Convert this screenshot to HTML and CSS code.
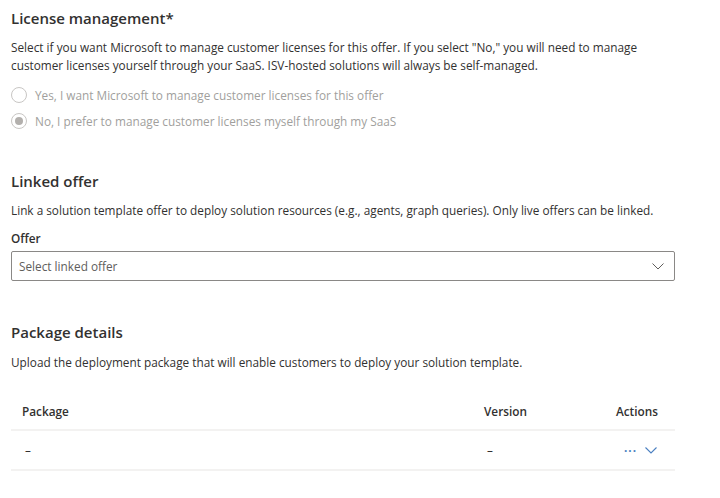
FILE: index.html
```html
<!DOCTYPE html>
<html lang="en">
<head>
<meta charset="utf-8">
<title>Offer setup</title>
<link rel="stylesheet" href="styles.css">
</head>
<body>
<main class="page">
  <section class="section">
    <h2 class="heading">License management<span class="req">*</span></h2>
    <p class="desc">Select if you want Microsoft to manage customer licenses for this offer. If you select "No," you will need to manage customer licenses yourself through your SaaS. ISV-hosted solutions will always be self-managed.</p>
    <div class="radios">
      <label class="radio"><span class="circle"></span><span class="radio-text">Yes, I want Microsoft to manage customer licenses for this offer</span></label>
      <label class="radio"><span class="circle checked"></span><span class="radio-text">No, I prefer to manage customer licenses myself through my SaaS</span></label>
    </div>
  </section>

  <section class="section linked">
    <h2 class="heading">Linked offer</h2>
    <p class="desc">Link a solution template offer to deploy solution resources (e.g., agents, graph queries). Only live offers can be linked.</p>
    <div class="field-label">Offer</div>
    <div class="dropdown">
      <span class="placeholder">Select linked offer</span>
      <svg class="chev" width="12" height="7" viewBox="0 0 12 7"><path d="M0.5 0.5 L6 6 L11.5 0.5" fill="none" stroke="#605e5c" stroke-width="1"/></svg>
    </div>
  </section>

  <section class="section package">
    <h2 class="heading">Package details</h2>
    <p class="desc pkg-desc">Upload the deployment package that will enable customers to deploy your solution template.</p>
    <div class="table">
      <div class="row head">
        <div class="cell c1">Package</div>
        <div class="cell c2">Version</div>
        <div class="cell c3">Actions</div>
      </div>
      <div class="row">
        <div class="cell c1 dash">–</div>
        <div class="cell c2 dash">–</div>
        <div class="cell c3 actions">
          <span class="dots">···</span>
          <svg class="act-chev" width="12" height="7" viewBox="0 0 12 7"><path d="M0.5 0.5 L6 6 L11.5 0.5" fill="none" stroke="#4a7fc1" stroke-width="1.1"/></svg>
        </div>
      </div>
    </div>
  </section>
</main>
</body>
</html>
```

FILE: styles.css
```css
* { box-sizing: border-box; }
html, body { margin: 0; padding: 0; background: #ffffff; }
body {
  font-family: "Open Sans", "Noto Sans", sans-serif;
  color: #323130;
  font-size: 11.8px;
}
.page {
  width: 675px;
  padding: 7px 0 0 11px;
}
.heading {
  margin: 0;
  font-size: 15px;
  line-height: 22px;
  font-weight: 600;
  color: #323130;
}
.req { margin-left: 0; }
.desc {
  margin: 9px 0 0 0;
  line-height: 18px;
  color: #323130;
}
.pkg-desc { margin-top: 10px; }
.radios {
  margin-top: 8px;
  display: flex;
  flex-direction: column;
}
.radio {
  display: flex;
  align-items: center;
  height: 26px;
  gap: 8px;
  color: #a19f9d;
}
.circle {
  width: 16px;
  height: 16px;
  border-radius: 50%;
  border: 1px solid #c8c6c4;
  display: flex;
  align-items: center;
  justify-content: center;
  flex: none;
}
.circle.checked::after {
  content: "";
  width: 8px;
  height: 8px;
  border-radius: 50%;
  background: #b3b0ad;
}
.linked { margin-top: 36px; }
.field-label {
  margin-top: 10px;
  font-weight: 600;
  line-height: 18px;
}
.dropdown {
  margin-top: 4px;
  height: 30px;
  border: 1px solid #8a8886;
  border-radius: 2px;
  display: flex;
  align-items: center;
  justify-content: space-between;
  padding: 0 10px 0 7px;
}
.placeholder { color: #605e5c; }
.chev { display: block; }
.package { margin-top: 40px; }
.table { margin-top: 22px; }
.row {
  display: grid;
  grid-template-columns: 462px 1fr 150px;
  border-bottom: 2px solid #f3f2f1;
}
.row.head { height: 38px; align-items: center; }
.row:not(.head) { height: 40px; align-items: center; }
.cell { padding: 0 11px; }
.head .cell { font-weight: 600; }
.c3 { text-align: right; padding-right: 30px; }
.dash { padding-left: 14px; }
.actions {
  display: flex;
  justify-content: flex-end;
  align-items: center;
  gap: 8px;
  padding-right: 18px;
}
.dots { color: #4a7fc1; font-weight: 700; letter-spacing: 1px; }
```
